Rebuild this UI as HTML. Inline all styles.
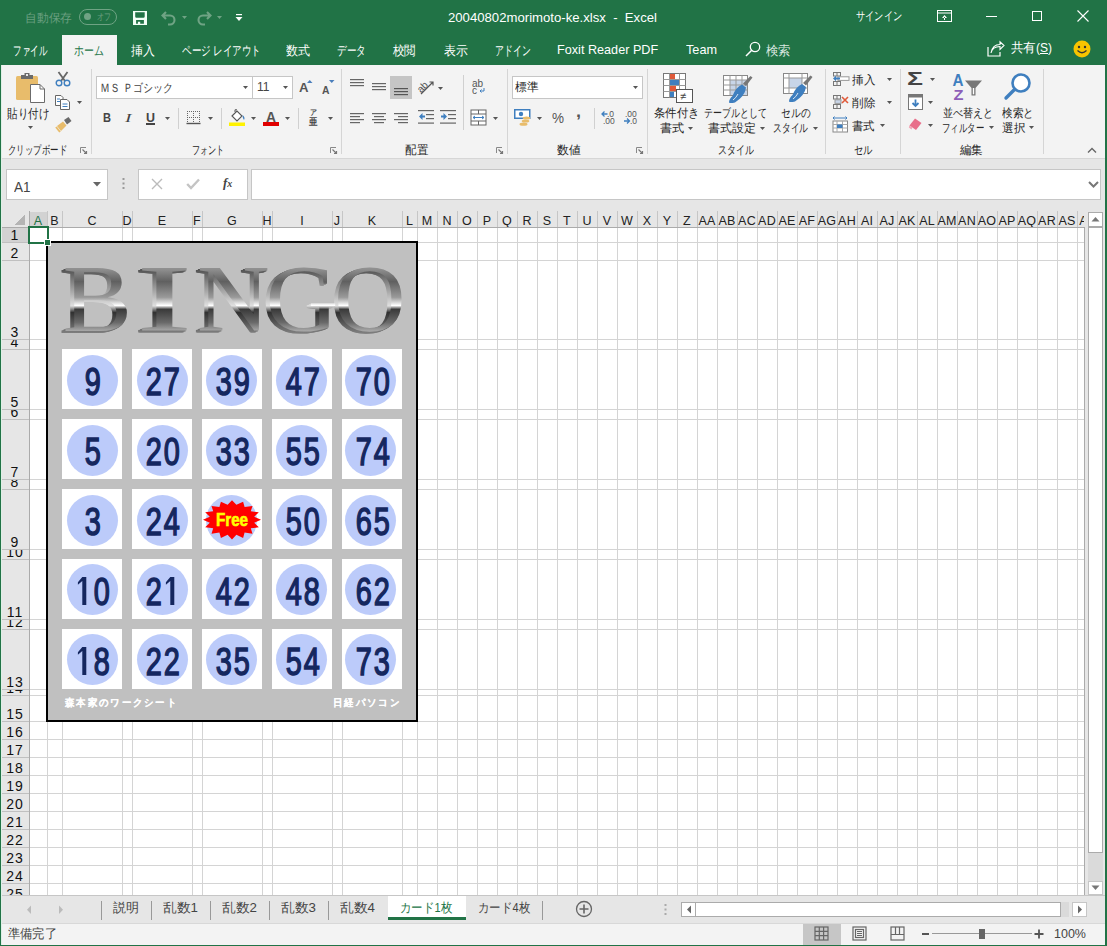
<!DOCTYPE html><html><head><meta charset="utf-8"><style>
*{margin:0;padding:0;box-sizing:border-box}
body{width:1107px;height:946px;overflow:hidden;position:relative;background:#f3f3f3;font-family:"Liberation Sans",sans-serif;color:#222}
.t{position:absolute;white-space:nowrap;line-height:1}
.hd{position:absolute;top:210px;height:17px;text-align:center;font-size:12.5px;line-height:22.5px;overflow:hidden;letter-spacing:0.2px}
.rh{position:absolute;left:0;width:27px;text-align:center;font-size:14px;line-height:14px;letter-spacing:1px;padding-left:1px;color:#111}
svg{position:absolute;overflow:visible}
</style></head><body>
<div style="position:absolute;left:0px;top:0px;width:1107px;height:65px;background:#217346"></div>
<div class="t" id="x1" style="left:25px;top:12px;font-size:12px;color:#6a9f80;transform:scaleX(0.9792);transform-origin:0 0;">自動保存</div>
<div style="position:absolute;left:79px;top:9px;width:38px;height:16px;border:1px solid #6fa384;border-radius:8px"></div>
<div style="position:absolute;left:84px;top:13px;width:7px;height:7px;background:#6fa384;border-radius:50%"></div>
<div class="t" id="x2" style="left:97px;top:12px;font-size:10px;color:#6a9f80;transform:scaleX(0.7000);transform-origin:0 0;">オフ</div>
<svg style="left:133px;top:11px" width="14" height="14"><path d="M0 0 H14 V14 H0Z M2.2 1.3 V5.5 Q2.2 6.7 3.4 6.7 H10.5 Q11.7 6.7 11.7 5.5 V1.3Z M3.1 9.1 V12.8 H4.9 V10.7 H7.2 V12.8 H10.9 V9.1Z" fill="#f2fff6" fill-rule="evenodd"/></svg>
<svg style="left:161px;top:10px" width="16" height="16"><path d="M5 2 L1.5 5.5 L5 9 M1.5 5.5 H9 A4.5 4.5 0 0 1 9 14.5 H7" fill="none" stroke="#6fa384" stroke-width="2.1"/></svg>
<svg style="left:182px;top:16px" width="6" height="4"><path d="M0 0 H5 L2.5 3Z" fill="#6fa384"/></svg>
<svg style="left:196px;top:10px" width="16" height="16"><path d="M11 2 L14.5 5.5 L11 9 M14.5 5.5 H7 A4.5 4.5 0 0 0 7 14.5 H9" fill="none" stroke="#6fa384" stroke-width="2.1"/></svg>
<svg style="left:217px;top:16px" width="6" height="4"><path d="M0 0 H5 L2.5 3Z" fill="#6fa384"/></svg>
<svg style="left:235px;top:14px" width="8" height="8"><rect x="1" y="0" width="6" height="1.2" fill="#fff"/><path d="M0.5 3 H7.5 L4 7Z" fill="#fff"/></svg>
<div class="t" id="x3" style="left:448px;top:11px;font-size:13.5px;color:#fff;transform:scaleX(0.9739);transform-origin:0 0;">20040802morimoto-ke.xlsx&nbsp; - &nbsp;Excel</div>
<div class="t" id="x4" style="left:856px;top:10px;font-size:12px;color:#fff;transform:scaleX(0.7667);transform-origin:0 0;">サインイン</div>
<svg style="left:937px;top:10px" width="15" height="12"><rect x="0.5" y="0.5" width="14" height="11" fill="none" stroke="#fff"/><rect x="1" y="2.5" width="13" height="1" fill="#fff"/><path d="M7.5 5 L5 8 H10Z M7 7 H8 V10 H7Z" fill="#fff"/></svg>
<div style="position:absolute;left:986px;top:16px;width:11px;height:1px;background:#fff"></div>
<div style="position:absolute;left:1032px;top:11px;width:10px;height:10px;border:1px solid #fff"></div>
<svg style="left:1077px;top:10px" width="12" height="12"><path d="M0.5 0.5 L11.5 11.5 M11.5 0.5 L0.5 11.5" stroke="#fff" stroke-width="1.1"/></svg>
<div style="position:absolute;left:62px;top:35px;width:55px;height:30px;background:#f3f3f3"></div>
<div class="t" id="x5" style="left:12.6px;top:44.5px;font-size:12.5px;color:#ffffff;transform:scaleX(0.6577);transform-origin:0 0;">ファイル</div>
<div class="t" id="x6" style="left:73.8px;top:44.5px;font-size:12.5px;color:#217346;transform:scaleX(0.7667);transform-origin:0 0;">ホーム</div>
<div class="t" id="x7" style="left:131px;top:44.5px;font-size:12.5px;color:#ffffff;transform:scaleX(0.9154);transform-origin:0 0;">挿入</div>
<div class="t" id="x8" style="left:181.6px;top:44.5px;font-size:12.5px;color:#ffffff;transform:scaleX(0.7341);transform-origin:0 0;">ページ レイアウト</div>
<div class="t" id="x9" style="left:286.4px;top:44.5px;font-size:12.5px;color:#ffffff;transform:scaleX(0.9269);transform-origin:0 0;">数式</div>
<div class="t" id="x10" style="left:337px;top:44.5px;font-size:12.5px;color:#ffffff;transform:scaleX(0.7436);transform-origin:0 0;">データ</div>
<div class="t" id="x11" style="left:393.2px;top:44.5px;font-size:12.5px;color:#ffffff;transform:scaleX(0.8846);transform-origin:0 0;">校閲</div>
<div class="t" id="x12" style="left:444px;top:44.5px;font-size:12.5px;color:#ffffff;transform:scaleX(0.9154);transform-origin:0 0;">表示</div>
<div class="t" id="x13" style="left:494.6px;top:44.5px;font-size:12.5px;color:#ffffff;transform:scaleX(0.6808);transform-origin:0 0;">アドイン</div>
<div class="t" id="x14" style="left:557.2px;top:43px;font-size:13.5px;color:#ffffff;transform:scaleX(0.9366);transform-origin:0 0;">Foxit Reader PDF</div>
<div class="t" id="x15" style="left:686px;top:43px;font-size:13.5px;color:#ffffff;transform:scaleX(0.9389);transform-origin:0 0;">Team</div>
<div class="t" id="x16" style="left:766.4px;top:44.5px;font-size:12.5px;color:#dce9e1;transform:scaleX(0.9500);transform-origin:0 0;">検索</div>
<svg style="left:745px;top:41px" width="16" height="16"><circle cx="10" cy="6" r="4.7" fill="none" stroke="#fff" stroke-width="1.3"/><path d="M6.7 9.3 L1 15" stroke="#fff" stroke-width="1.5"/></svg>
<svg style="left:987px;top:41px" width="18" height="16"><path d="M1 6 V15 H13 V11" fill="none" stroke="#fff" stroke-width="1.2"/><path d="M4 12 C5 7 9 5.5 13 5.5 V8.5 L17 4.5 L13 0.8 V3.5 C9 3.5 5 6 4 12Z" fill="none" stroke="#fff" stroke-width="1.1"/></svg>
<div class="t" id="x17" style="left:1011px;top:42px;font-size:12.5px;color:#fff;transform:scaleX(0.9605);transform-origin:0 0;">共有(<u>S</u>)</div>
<svg style="left:1073px;top:40px" width="18" height="18"><circle cx="9" cy="9" r="8.5" fill="#f8c400"/><circle cx="6" cy="7" r="1.2" fill="#333"/><circle cx="12" cy="7" r="1.2" fill="#333"/><path d="M4.5 10.5 Q9 15 13.5 10.5" fill="none" stroke="#333" stroke-width="1.2"/></svg>
<div style="position:absolute;left:0px;top:65px;width:1107px;height:94px;background:#f3f3f3"></div>
<div style="position:absolute;left:0px;top:158px;width:1107px;height:1px;background:#d6d6d6"></div>
<div style="position:absolute;left:91px;top:69px;width:1px;height:85px;background:#d5d5d5"></div>
<div style="position:absolute;left:341px;top:69px;width:1px;height:85px;background:#d5d5d5"></div>
<div style="position:absolute;left:507px;top:69px;width:1px;height:85px;background:#d5d5d5"></div>
<div style="position:absolute;left:647px;top:69px;width:1px;height:85px;background:#d5d5d5"></div>
<div style="position:absolute;left:825px;top:69px;width:1px;height:85px;background:#d5d5d5"></div>
<div style="position:absolute;left:900px;top:69px;width:1px;height:85px;background:#d5d5d5"></div>
<div style="position:absolute;left:1043px;top:69px;width:1px;height:85px;background:#d5d5d5"></div>
<svg style="left:15px;top:72px" width="31" height="32">
<rect x="1" y="4" width="22" height="24" rx="1.5" fill="#e8bc6b"/>
<path d="M6 3 H9.5 V1 H14.5 V3 H18 V7 H6Z" fill="#6b6b6b"/>
<rect x="11" y="2" width="2" height="2" fill="#e8e8e8"/>
<path d="M15.5 12.5 H25 L29.5 17 V30.5 H15.5Z" fill="#fff" stroke="#6b6b6b" stroke-width="1"/>
<path d="M25 12.5 V17 H29.5" fill="none" stroke="#6b6b6b" stroke-width="1"/>
</svg>
<div class="t" id="x18" style="left:7px;top:107.5px;font-size:12.5px;color:#262626;transform:scaleX(0.8077);transform-origin:0 0;">貼り付け</div>
<svg style="left:28.0px;top:126.0px" width="5" height="3"><path d="M0 0 H5 L2.5 3Z" fill="#555"/></svg>
<div class="t" id="x19" style="left:8px;top:144px;font-size:12px;color:#262626;transform:scaleX(0.7024);transform-origin:0 0;">クリップボード</div>
<svg style="left:80px;top:147px" width="7" height="7"><path d="M0.5 6 V0.5 H6" fill="none" stroke="#888" stroke-width="1"/><path d="M2.5 2.5 L6 6 M4 6.5 H6.5 V4" fill="none" stroke="#777" stroke-width="1.2"/></svg>
<svg style="left:55px;top:71px" width="16" height="16">
<path d="M3.5 1 L10 10 M12.5 1 L6 10" stroke="#666" stroke-width="1.8"/>
<circle cx="4" cy="12" r="2.8" fill="none" stroke="#3f7fbf" stroke-width="1.4"/>
<circle cx="12" cy="12" r="2.8" fill="none" stroke="#3f7fbf" stroke-width="1.4"/>
</svg>
<svg style="left:55px;top:95px" width="16" height="15">
<path d="M0.5 0.5 H6 L8 2.5 V10.5 H0.5Z" fill="#fff" stroke="#666"/>
<path d="M5.5 4.5 H12 L14.5 7 V14.5 H5.5Z" fill="#fff" stroke="#666"/>
<path d="M2 4 H5 M2 6.5 H5 M7.5 9 H12.5 M7.5 11.5 H12.5" stroke="#3f7fbf" stroke-width="1"/>
</svg>
<svg style="left:77.0px;top:101.0px" width="5" height="3"><path d="M0 0 H5 L2.5 3Z" fill="#555"/></svg>
<svg style="left:55px;top:117px" width="17" height="16">
<path d="M9 3 L13.5 0 L16.5 4 L12 7.5Z" fill="#6b6b6b"/>
<path d="M2 9 L8 4.5 L11.5 8.5 L6 14Z" fill="#e8bc6b"/>
<path d="M1 10 L5 15" stroke="#e8bc6b" stroke-width="2"/>
</svg>
<div style="position:absolute;left:96px;top:76px;width:157px;height:23px;background:#fff;border:1px solid #c6c6c6"></div>
<div class="t" id="x20" style="left:100px;top:82.5px;font-size:11.5px;color:#444;transform:scaleX(0.8371);transform-origin:0 0;">ＭＳ Ｐゴシック</div>
<svg style="left:243.0px;top:86.0px" width="5" height="3"><path d="M0 0 H5 L2.5 3Z" fill="#555"/></svg>
<div style="position:absolute;left:252px;top:76px;width:41px;height:23px;background:#fff;border:1px solid #c6c6c6"></div>
<div class="t" id="x21" style="left:256.5px;top:81px;font-size:12.5px;color:#444;transform:scaleX(0.9627);transform-origin:0 0;">11</div>
<svg style="left:283.0px;top:86.0px" width="5" height="3"><path d="M0 0 H5 L2.5 3Z" fill="#555"/></svg>
<div class="t" id="x22" style="left:299px;top:81px;font-size:13.5px;font-weight:bold;color:#555;transform:scaleX(0.9744);transform-origin:0 0;">A</div>
<svg style="left:306.5px;top:80px" width="6" height="3"><path d="M0 3 H5.5 L2.75 0Z" fill="#4a7ebb"/></svg>
<div class="t" id="x23" style="left:322px;top:84.5px;font-size:10.5px;font-weight:bold;color:#555;transform:scaleX(0.9877);transform-origin:0 0;">A</div>
<svg style="left:329px;top:80px" width="6" height="3"><path d="M0 0 H5.5 L2.75 3Z" fill="#4a7ebb"/></svg>
<div class="t" id="x24" style="left:102.5px;top:111.5px;font-size:12px;font-weight:bold;color:#444;transform:scaleX(0.9225);transform-origin:0 0;">B</div>
<div class="t" id="x25" style="left:125px;top:111.5px;font-size:12.5px;font-style:italic;font-family:Liberation Serif,serif;color:#444;transform:scaleX(1.5581);transform-origin:0 0;">I</div>
<div class="t" id="x26" style="left:146px;top:111.5px;font-size:12px;font-weight:bold;color:#444;transform:scaleX(1.0378);transform-origin:0 0;">U</div>
<div style="position:absolute;left:146px;top:123px;width:9px;height:1.5px;background:#444"></div>
<svg style="left:165.0px;top:116.5px" width="5" height="3"><path d="M0 0 H5 L2.5 3Z" fill="#555"/></svg>
<div style="position:absolute;left:178px;top:108px;width:1px;height:21px;background:#d0d0d0"></div>
<svg style="left:186px;top:110px" width="15" height="15">
<path d="M1 1.5 H14 M1 7.5 H14 M1.5 1 V13 M7.5 1 V13 M13.5 1 V13" stroke="#666" stroke-width="1" stroke-dasharray="1 1" fill="none"/>
<rect x="0.5" y="12.8" width="14" height="1.4" fill="#555"/>
</svg>
<svg style="left:208.0px;top:116.5px" width="5" height="3"><path d="M0 0 H5 L2.5 3Z" fill="#555"/></svg>
<div style="position:absolute;left:221px;top:108px;width:1px;height:21px;background:#d0d0d0"></div>
<svg style="left:229px;top:109px" width="18" height="18">
<path d="M3 7 L8 2 L13 7 L8 12Z" fill="#fff" stroke="#555" stroke-width="1.1"/>
<path d="M6 3 L6 0.8 L8 0.8" fill="none" stroke="#555" stroke-width="1"/>
<path d="M13.5 6 Q16.5 8.5 15 11 Q13.5 9 13.5 6Z" fill="#3f7fbf"/>
<rect x="0" y="13.5" width="16" height="3.5" fill="#fff200"/>
</svg>
<svg style="left:251.0px;top:116.5px" width="5" height="3"><path d="M0 0 H5 L2.5 3Z" fill="#555"/></svg>
<div class="t" id="x27" style="left:266px;top:110px;font-size:14px;font-weight:bold;color:#555;transform:scaleX(0.9877);transform-origin:0 0;">A</div>
<div style="position:absolute;left:263px;top:122px;width:16px;height:4px;background:#e00000"></div>
<svg style="left:285.0px;top:116.5px" width="5" height="3"><path d="M0 0 H5 L2.5 3Z" fill="#555"/></svg>
<div style="position:absolute;left:298px;top:108px;width:1px;height:21px;background:#d0d0d0"></div>
<div class="t" id="x28" style="left:310px;top:108.5px;font-size:7.5px;color:#444;font-weight:bold;transform:scaleX(0.8750);transform-origin:0 0;">ア</div>
<div class="t" id="x29" style="left:309px;top:117px;font-size:9.5px;color:#444;font-weight:bold;transform:scaleX(0.8500);transform-origin:0 0;">亜</div>
<svg style="left:328.0px;top:116.5px" width="5" height="3"><path d="M0 0 H5 L2.5 3Z" fill="#555"/></svg>
<div class="t" id="x30" style="left:192.3px;top:144px;font-size:12px;color:#262626;transform:scaleX(0.6771);transform-origin:0 0;">フォント</div>
<svg style="left:330px;top:147px" width="7" height="7"><path d="M0.5 6 V0.5 H6" fill="none" stroke="#888" stroke-width="1"/><path d="M2.5 2.5 L6 6 M4 6.5 H6.5 V4" fill="none" stroke="#777" stroke-width="1.2"/></svg>
<svg style="left:350px;top:0px" width="16" height="130"><rect x="0" y="79" width="14" height="1.2" fill="#666"/><rect x="0" y="82" width="14" height="1.2" fill="#666"/><rect x="0" y="85" width="14" height="1.2" fill="#666"/></svg>
<svg style="left:372px;top:0px" width="16" height="130"><rect x="0" y="83" width="14" height="1.2" fill="#666"/><rect x="0" y="86" width="14" height="1.2" fill="#666"/><rect x="0" y="89" width="14" height="1.2" fill="#666"/></svg>
<div style="position:absolute;left:390px;top:76px;width:22px;height:23px;background:#c5c5c5"></div>
<svg style="left:394px;top:0px" width="16" height="130"><rect x="0" y="88" width="14" height="1.2" fill="#555"/><rect x="0" y="91" width="14" height="1.2" fill="#555"/><rect x="0" y="94" width="14" height="1.2" fill="#555"/></svg>
<svg style="left:417px;top:78px" width="20" height="18">
<text x="0" y="12" font-size="10" font-family="Liberation Sans" fill="#555" transform="rotate(-45 6 9)">ab</text>
<path d="M4 16 L16 4 M12.5 4 H16 V7.5" fill="none" stroke="#555" stroke-width="1.2"/>
</svg>
<svg style="left:438.0px;top:86.5px" width="5" height="3"><path d="M0 0 H5 L2.5 3Z" fill="#555"/></svg>
<svg style="left:350px;top:0px" width="16" height="130"><rect x="0" y="113" width="14" height="1.2" fill="#666"/><rect x="0" y="116" width="10" height="1.2" fill="#666"/><rect x="0" y="119" width="14" height="1.2" fill="#666"/><rect x="0" y="122" width="10" height="1.2" fill="#666"/></svg>
<svg style="left:372px;top:0px" width="16" height="130"><rect x="0.0" y="113" width="14" height="1.2" fill="#666"/><rect x="2.0" y="116" width="10" height="1.2" fill="#666"/><rect x="0.0" y="119" width="14" height="1.2" fill="#666"/><rect x="2.0" y="122" width="10" height="1.2" fill="#666"/></svg>
<svg style="left:394px;top:0px" width="16" height="130"><rect x="0" y="113" width="14" height="1.2" fill="#666"/><rect x="4" y="116" width="10" height="1.2" fill="#666"/><rect x="0" y="119" width="14" height="1.2" fill="#666"/><rect x="4" y="122" width="10" height="1.2" fill="#666"/></svg>
<svg style="left:418px;top:110px" width="17" height="15">
<rect x="0" y="0" width="16" height="1.2" fill="#666"/><rect x="0" y="12.5" width="16" height="1.2" fill="#666"/>
<rect x="8" y="4" width="8" height="1.2" fill="#666"/><rect x="8" y="8" width="8" height="1.2" fill="#666"/>
<path d="M1 6.5 L4.5 3 V5.5 H7 V7.5 H4.5 V10Z" fill="#3f7fbf"/>
</svg>
<svg style="left:440px;top:110px" width="17" height="15">
<rect x="0" y="0" width="16" height="1.2" fill="#666"/><rect x="0" y="12.5" width="16" height="1.2" fill="#666"/>
<rect x="8" y="4" width="8" height="1.2" fill="#666"/><rect x="8" y="8" width="8" height="1.2" fill="#666"/>
<path d="M7 6.5 L3.5 3 V5.5 H1 V7.5 H3.5 V10Z" fill="#3f7fbf"/>
</svg>
<div style="position:absolute;left:463px;top:75px;width:1px;height:55px;background:#d0d0d0"></div>
<svg style="left:472px;top:79px" width="14" height="16">
<text x="0" y="8" font-size="10" font-family="Liberation Sans" fill="#555">ab</text>
<text x="0" y="15" font-size="10" font-family="Liberation Sans" fill="#555">c</text>
<path d="M12 9 V12 H8 M9.5 10.5 L8 12 L9.5 13.5" fill="none" stroke="#3f7fbf" stroke-width="1"/>
</svg>
<svg style="left:470px;top:109px" width="17" height="17">
<rect x="1" y="1" width="15" height="15" fill="#fff" stroke="#666" stroke-width="1"/>
<path d="M1 5 H16 M1 12 H16 M8.5 1 V5 M8.5 12 V16" stroke="#666" stroke-width="1"/>
<path d="M3 8.5 H14 M5 7 L3 8.5 L5 10 M12 7 L14 8.5 L12 10" fill="none" stroke="#3f7fbf" stroke-width="1"/>
</svg>
<svg style="left:493.0px;top:117.0px" width="5" height="3"><path d="M0 0 H5 L2.5 3Z" fill="#555"/></svg>
<div class="t" id="x31" style="left:404.5px;top:143.5px;font-size:12px;color:#262626;transform:scaleX(0.9625);transform-origin:0 0;">配置</div>
<svg style="left:496px;top:147px" width="7" height="7"><path d="M0.5 6 V0.5 H6" fill="none" stroke="#888" stroke-width="1"/><path d="M2.5 2.5 L6 6 M4 6.5 H6.5 V4" fill="none" stroke="#777" stroke-width="1.2"/></svg>
<div style="position:absolute;left:512px;top:76px;width:131px;height:23px;background:#fff;border:1px solid #c6c6c6"></div>
<div class="t" id="x32" style="left:515.2px;top:81px;font-size:12px;color:#262626;transform:scaleX(0.9750);transform-origin:0 0;">標準</div>
<svg style="left:633.0px;top:86.0px" width="5" height="3"><path d="M0 0 H5 L2.5 3Z" fill="#555"/></svg>
<svg style="left:514px;top:109px" width="18" height="18">
<rect x="0.75" y="0.75" width="15" height="8.5" fill="#fff" stroke="#3f7fbf" stroke-width="1.5"/>
<circle cx="7" cy="5" r="2.2" fill="#3f7fbf"/>
<ellipse cx="12.5" cy="9" rx="3.8" ry="1.6" fill="#e8bc6b"/>
<ellipse cx="11.5" cy="12" rx="3.8" ry="1.6" fill="#e8bc6b"/>
<ellipse cx="9.5" cy="15.2" rx="4" ry="1.6" fill="#e8bc6b"/>
</svg>
<svg style="left:537.0px;top:117.0px" width="5" height="3"><path d="M0 0 H5 L2.5 3Z" fill="#555"/></svg>
<div class="t" id="x33" style="left:551.5px;top:111px;font-size:14px;color:#555;transform:scaleX(0.9636);transform-origin:0 0;">%</div>
<div class="t" id="x34" style="left:576px;top:103px;font-size:17px;font-weight:bold;color:#555;transform:scaleX(1.0561);transform-origin:0 0;">,</div>
<div style="position:absolute;left:594px;top:108px;width:1px;height:21px;background:#d0d0d0"></div>
<svg style="left:601px;top:110px" width="17" height="15">
<text x="6" y="7" font-size="8.5" font-family="Liberation Sans" fill="#555">.0</text>
<text x="2" y="14" font-size="8.5" font-family="Liberation Sans" fill="#555">.00</text>
<path d="M1 4 H6.5 M3.5 1.5 L1 4 L3.5 6.5" fill="none" stroke="#3f7fbf" stroke-width="1.3"/>
</svg>
<svg style="left:623px;top:110px" width="17" height="15">
<text x="2" y="7" font-size="8.5" font-family="Liberation Sans" fill="#555">.00</text>
<text x="7" y="14" font-size="8.5" font-family="Liberation Sans" fill="#555">.0</text>
<path d="M1 11 H6.5 M4 8.5 L6.5 11 L4 13.5" fill="none" stroke="#3f7fbf" stroke-width="1.3"/>
</svg>
<div class="t" id="x35" style="left:557.2px;top:143.5px;font-size:12px;color:#262626;transform:scaleX(0.9875);transform-origin:0 0;">数値</div>
<svg style="left:636px;top:147px" width="7" height="7"><path d="M0.5 6 V0.5 H6" fill="none" stroke="#888" stroke-width="1"/><path d="M2.5 2.5 L6 6 M4 6.5 H6.5 V4" fill="none" stroke="#777" stroke-width="1.2"/></svg>
<svg style="left:662px;top:72px" width="32" height="32">
<g fill="#fff" stroke="#777" stroke-width="1">
<rect x="1.5" y="1.5" width="22" height="24"/>
</g>
<path d="M1.5 7.5 H23.5 M1.5 13.5 H23.5 M1.5 19.5 H23.5 M7.5 1.5 V25.5 M17.5 1.5 V25.5" stroke="#999" stroke-width="1"/>
<rect x="8" y="2" width="5" height="5" fill="#e05a3a"/>
<rect x="8" y="8" width="9" height="5" fill="#3f7fbf"/>
<rect x="8" y="14" width="6" height="5" fill="#e05a3a"/>
<rect x="8" y="20" width="4" height="5" fill="#3f7fbf"/>
<rect x="14.5" y="17.5" width="16" height="13" fill="#fff" stroke="#555" stroke-width="1"/>
<text x="18" y="28" font-size="11" font-family="Liberation Sans" fill="#444">≠</text>
</svg>
<div class="t" id="x36" style="left:653.7px;top:107px;font-size:12px;color:#262626;transform:scaleX(0.9500);transform-origin:0 0;">条件付き</div>
<div class="t" id="x37" style="left:660px;top:122px;font-size:12px;color:#262626;transform:scaleX(1.0125);transform-origin:0 0;">書式</div>
<svg style="left:688.0px;top:126.5px" width="5" height="3"><path d="M0 0 H5 L2.5 3Z" fill="#555"/></svg>
<svg style="left:722px;top:74px" width="32" height="30">
<rect x="1.5" y="1.5" width="24" height="20" fill="#fff" stroke="#888"/>
<rect x="8" y="6" width="17" height="15" fill="#c8d5e8"/>
<path d="M1.5 6 H25.5 M1.5 11 H25.5 M1.5 16 H25.5 M8 1.5 V21.5 M14 1.5 V21.5 M20 1.5 V21.5" stroke="#999" stroke-width="1"/>
<path d="M30.5 3.5 L24 12 L21 9.5 L28.5 2Z" fill="#777"/>
<path d="M20 10.5 L24 13.5 Q23 22 13 28.5 Q8 29.5 7 28.5 Q7 25 10.5 22 Q14 13 20 10.5Z" fill="#3f7fbf"/>
<path d="M11 26 Q14 24 16 20" fill="none" stroke="#fff" stroke-width="0.8"/>
</svg>
<div class="t" id="x38" style="left:704.4px;top:107px;font-size:12px;color:#262626;transform:scaleX(0.7452);transform-origin:0 0;">テーブルとして</div>
<div class="t" id="x39" style="left:708.2px;top:122px;font-size:12px;color:#262626;transform:scaleX(1.0000);transform-origin:0 0;">書式設定</div>
<svg style="left:760.0px;top:126.5px" width="5" height="3"><path d="M0 0 H5 L2.5 3Z" fill="#555"/></svg>
<svg style="left:782px;top:72px" width="32" height="30">
<rect x="1.5" y="1.5" width="24" height="20" fill="#fff" stroke="#888"/>
<rect x="7" y="6" width="13" height="10" fill="#c8d5e8"/>
<path d="M1.5 6 H25.5 M1.5 16 H25.5 M7 1.5 V21.5 M20 1.5 V21.5" stroke="#999" stroke-width="1"/>
<path d="M30.5 5 L24 13.5 L21 11 L28.5 3.5Z" fill="#777"/>
<path d="M20 12 L24 15 Q23 23 13 29.5 Q8 30.5 7 29.5 Q7 26 10.5 23 Q14 14.5 20 12Z" fill="#3f7fbf"/>
<path d="M11 27 Q14 25 16 21" fill="none" stroke="#fff" stroke-width="0.8"/>
</svg>
<div class="t" id="x40" style="left:781.3px;top:107px;font-size:12px;color:#262626;transform:scaleX(0.8139);transform-origin:0 0;">セルの</div>
<div class="t" id="x41" style="left:772.9px;top:122px;font-size:12px;color:#262626;transform:scaleX(0.7313);transform-origin:0 0;">スタイル</div>
<svg style="left:812.5px;top:126.5px" width="5" height="3"><path d="M0 0 H5 L2.5 3Z" fill="#555"/></svg>
<div class="t" id="x42" style="left:717.7px;top:143.5px;font-size:12px;color:#262626;transform:scaleX(0.7500);transform-origin:0 0;">スタイル</div>
<svg style="left:832px;top:71px" width="18" height="16">
<g fill="none" stroke="#777" stroke-width="1"><rect x="1.5" y="1.5" width="7" height="3.5"/><rect x="1.5" y="10.5" width="7" height="4"/><path d="M5 10.5 V14.5 M5 1.5 V5"/></g>
<rect x="6" y="5.8" width="11" height="3.6" fill="#fff" stroke="#999" stroke-width="1"/>
<path d="M1 7.5 L4 4.8 V6.5 H8 V8.5 H4 V10.2Z" fill="#3f7fbf"/>
</svg>
<div class="t" id="x43" style="left:852.1px;top:74px;font-size:12px;color:#262626;transform:scaleX(0.9625);transform-origin:0 0;">挿入</div>
<svg style="left:886.5px;top:78.0px" width="5" height="3"><path d="M0 0 H5 L2.5 3Z" fill="#555"/></svg>
<svg style="left:832px;top:94px" width="18" height="16">
<g fill="none" stroke="#777" stroke-width="1"><rect x="1.5" y="1.5" width="7" height="3.5"/><rect x="1.5" y="10.5" width="7" height="4"/><path d="M5 10.5 V14.5 M5 1.5 V5"/></g>
<rect x="3" y="5.8" width="6" height="3.6" fill="#c8d5e8" stroke="#999" stroke-width="1"/>
<path d="M10 3 L16 9 M16 3 L10 9" stroke="#e05a3a" stroke-width="1.6"/>
</svg>
<div class="t" id="x44" style="left:852.1px;top:97px;font-size:12px;color:#262626;transform:scaleX(0.9625);transform-origin:0 0;">削除</div>
<svg style="left:886.5px;top:101.0px" width="5" height="3"><path d="M0 0 H5 L2.5 3Z" fill="#555"/></svg>
<svg style="left:832px;top:116px" width="17" height="17">
<path d="M1 2 H15 M2.5 0.5 L1 2 L2.5 3.5 M13.5 0.5 L15 2 L13.5 3.5" fill="none" stroke="#3f7fbf" stroke-width="1"/>
<rect x="1" y="5" width="14.5" height="11" fill="#fff" stroke="#888" stroke-width="1"/>
<path d="M1 8.5 H15.5 M1 12 H15.5 M5 5 V16 M10.5 5 V16" stroke="#aaa" stroke-width="1"/>
<rect x="5" y="8.5" width="5.5" height="3.5" fill="#3f7fbf"/>
</svg>
<div class="t" id="x45" style="left:852.3px;top:120px;font-size:12px;color:#262626;transform:scaleX(0.9542);transform-origin:0 0;">書式</div>
<svg style="left:880.0px;top:124.0px" width="5" height="3"><path d="M0 0 H5 L2.5 3Z" fill="#555"/></svg>
<div class="t" id="x46" style="left:854.1px;top:143.5px;font-size:12px;color:#262626;transform:scaleX(0.7750);transform-origin:0 0;">セル</div>
<div class="t" id="x47" style="left:907px;top:69px;font-size:19px;color:#444;font-weight:bold;transform:scaleX(1.4027);transform-origin:0 0;">Σ</div>
<svg style="left:930.0px;top:78.0px" width="5" height="3"><path d="M0 0 H5 L2.5 3Z" fill="#555"/></svg>
<svg style="left:908px;top:94px" width="16" height="17">
<rect x="0.5" y="0.5" width="14" height="15" fill="#fff" stroke="#777"/>
<rect x="0.5" y="0.5" width="14" height="3" fill="#777"/>
<path d="M7.5 5.5 V12 M4.5 9 L7.5 12 L10.5 9" fill="none" stroke="#3f7fbf" stroke-width="1.8"/>
</svg>
<svg style="left:928.0px;top:101.0px" width="5" height="3"><path d="M0 0 H5 L2.5 3Z" fill="#555"/></svg>
<svg style="left:908px;top:117px" width="15" height="15">
<path d="M7 1.5 L13.5 6 L8 13 L1.5 8.5Z" fill="#e86f8a"/>
<path d="M1.5 8.5 L4.5 10.5 L3.5 12.5 L0.8 10.5Z" fill="#f2a7b6"/>
</svg>
<svg style="left:928.0px;top:123.5px" width="5" height="3"><path d="M0 0 H5 L2.5 3Z" fill="#555"/></svg>
<svg style="left:952px;top:73px" width="32" height="28">
<text x="0.5" y="12.5" font-size="16" font-weight="bold" font-family="Liberation Sans" fill="#3f7fbf" textLength="11" lengthAdjust="spacingAndGlyphs">A</text>
<text x="1.5" y="27" font-size="15" font-weight="bold" font-family="Liberation Sans" fill="#8e5fb8" textLength="10" lengthAdjust="spacingAndGlyphs">Z</text>
<path d="M13 7.5 H30 L23.5 15 V22.5 H19.5 V15Z" fill="#777"/>
<path d="M20.8 15 V21.3 H22.2 V15Z" fill="#fff"/>
</svg>
<div class="t" id="x48" style="left:943.1px;top:107px;font-size:12px;color:#262626;transform:scaleX(0.8400);transform-origin:0 0;">並べ替えと</div>
<div class="t" id="x49" style="left:942px;top:121.5px;font-size:12px;color:#262626;transform:scaleX(0.7000);transform-origin:0 0;">フィルター</div>
<svg style="left:989.0px;top:126.0px" width="5" height="3"><path d="M0 0 H5 L2.5 3Z" fill="#555"/></svg>
<svg style="left:1003px;top:72px" width="30" height="29">
<circle cx="18" cy="11" r="8.5" fill="#fff" stroke="#3f7fbf" stroke-width="2.6"/>
<path d="M11.5 17.5 L3 26" stroke="#3f7fbf" stroke-width="3.4" stroke-linecap="round"/>
</svg>
<div class="t" id="x50" style="left:1002.3px;top:107px;font-size:12px;color:#262626;transform:scaleX(0.8778);transform-origin:0 0;">検索と</div>
<div class="t" id="x51" style="left:1001.6px;top:121.5px;font-size:12px;color:#262626;transform:scaleX(0.9625);transform-origin:0 0;">選択</div>
<svg style="left:1029.0px;top:126.0px" width="5" height="3"><path d="M0 0 H5 L2.5 3Z" fill="#555"/></svg>
<div class="t" id="x52" style="left:960.3px;top:143.5px;font-size:12px;color:#262626;transform:scaleX(0.9583);transform-origin:0 0;">編集</div>
<svg style="left:1087px;top:147px" width="10" height="7"><path d="M1 5.5 L5 1.5 L9 5.5" fill="none" stroke="#666" stroke-width="1.4"/></svg>
<div style="position:absolute;left:0px;top:159px;width:1107px;height:736px;background:#e6e6e6"></div>
<div style="position:absolute;left:6px;top:169px;width:102px;height:31px;background:#fff;border:1px solid #c6c6c6"></div>
<div class="t" id="x53" style="left:14px;top:180px;font-size:14px;color:#444;transform:scaleX(0.9635);transform-origin:0 0;">A1</div>
<svg style="left:93px;top:182px" width="8" height="5"><path d="M0 0 H8 L4 4.5Z" fill="#666"/></svg>
<svg style="left:122px;top:178px" width="3" height="12"><rect x="0.5" y="0" width="2" height="2" fill="#999"/><rect x="0.5" y="4.5" width="2" height="2" fill="#999"/><rect x="0.5" y="9" width="2" height="2" fill="#999"/></svg>
<div style="position:absolute;left:138px;top:169px;width:110px;height:31px;background:#fff;border:1px solid #c6c6c6"></div>
<svg style="left:151px;top:178px" width="12" height="12"><path d="M1 1 L11 11 M11 1 L1 11" stroke="#bbb" stroke-width="1.4"/></svg>
<svg style="left:186px;top:178px" width="14" height="12"><path d="M1.2 6 L5 10 L13 1.5" fill="none" stroke="#c4c4c4" stroke-width="2.4"/></svg>
<div class="t" id="x54" style="left:223px;top:175.5px;font-size:13px;font-family:Liberation Serif,serif;font-weight:bold;color:#444;"><i>f</i><span style="font-size:10px"><i>x</i></span></div>
<div style="position:absolute;left:251px;top:169px;width:850px;height:31px;background:#fff;border:1px solid #c6c6c6"></div>
<svg style="left:1088px;top:181px" width="11" height="7"><path d="M1 1 L5.5 5.5 L10 1" fill="none" stroke="#777" stroke-width="2"/></svg>
<svg width="1107" height="946" style="left:0;top:0" shape-rendering="crispEdges"><rect x="30" y="228" width="1054" height="667" fill="#fff"/><rect x="47" y="228" width="1" height="667" fill="#d4d4d4"/><rect x="62" y="228" width="1" height="667" fill="#d4d4d4"/><rect x="122" y="228" width="1" height="667" fill="#d4d4d4"/><rect x="132" y="228" width="1" height="667" fill="#d4d4d4"/><rect x="192" y="228" width="1" height="667" fill="#d4d4d4"/><rect x="202" y="228" width="1" height="667" fill="#d4d4d4"/><rect x="262" y="228" width="1" height="667" fill="#d4d4d4"/><rect x="272" y="228" width="1" height="667" fill="#d4d4d4"/><rect x="332" y="228" width="1" height="667" fill="#d4d4d4"/><rect x="342" y="228" width="1" height="667" fill="#d4d4d4"/><rect x="402" y="228" width="1" height="667" fill="#d4d4d4"/><rect x="417" y="228" width="1" height="667" fill="#d4d4d4"/><rect x="437" y="228" width="1" height="667" fill="#d4d4d4"/><rect x="457" y="228" width="1" height="667" fill="#d4d4d4"/><rect x="477" y="228" width="1" height="667" fill="#d4d4d4"/><rect x="497" y="228" width="1" height="667" fill="#d4d4d4"/><rect x="517" y="228" width="1" height="667" fill="#d4d4d4"/><rect x="537" y="228" width="1" height="667" fill="#d4d4d4"/><rect x="557" y="228" width="1" height="667" fill="#d4d4d4"/><rect x="577" y="228" width="1" height="667" fill="#d4d4d4"/><rect x="597" y="228" width="1" height="667" fill="#d4d4d4"/><rect x="617" y="228" width="1" height="667" fill="#d4d4d4"/><rect x="637" y="228" width="1" height="667" fill="#d4d4d4"/><rect x="657" y="228" width="1" height="667" fill="#d4d4d4"/><rect x="677" y="228" width="1" height="667" fill="#d4d4d4"/><rect x="697" y="228" width="1" height="667" fill="#d4d4d4"/><rect x="717" y="228" width="1" height="667" fill="#d4d4d4"/><rect x="737" y="228" width="1" height="667" fill="#d4d4d4"/><rect x="757" y="228" width="1" height="667" fill="#d4d4d4"/><rect x="777" y="228" width="1" height="667" fill="#d4d4d4"/><rect x="797" y="228" width="1" height="667" fill="#d4d4d4"/><rect x="817" y="228" width="1" height="667" fill="#d4d4d4"/><rect x="837" y="228" width="1" height="667" fill="#d4d4d4"/><rect x="857" y="228" width="1" height="667" fill="#d4d4d4"/><rect x="877" y="228" width="1" height="667" fill="#d4d4d4"/><rect x="897" y="228" width="1" height="667" fill="#d4d4d4"/><rect x="917" y="228" width="1" height="667" fill="#d4d4d4"/><rect x="937" y="228" width="1" height="667" fill="#d4d4d4"/><rect x="957" y="228" width="1" height="667" fill="#d4d4d4"/><rect x="977" y="228" width="1" height="667" fill="#d4d4d4"/><rect x="997" y="228" width="1" height="667" fill="#d4d4d4"/><rect x="1017" y="228" width="1" height="667" fill="#d4d4d4"/><rect x="1037" y="228" width="1" height="667" fill="#d4d4d4"/><rect x="1057" y="228" width="1" height="667" fill="#d4d4d4"/><rect x="1077" y="228" width="1" height="667" fill="#d4d4d4"/><rect x="30" y="242" width="1054" height="1" fill="#d4d4d4"/><rect x="30" y="260" width="1054" height="1" fill="#d4d4d4"/><rect x="30" y="339" width="1054" height="1" fill="#d4d4d4"/><rect x="30" y="349" width="1054" height="1" fill="#d4d4d4"/><rect x="30" y="409" width="1054" height="1" fill="#d4d4d4"/><rect x="30" y="419" width="1054" height="1" fill="#d4d4d4"/><rect x="30" y="479" width="1054" height="1" fill="#d4d4d4"/><rect x="30" y="489" width="1054" height="1" fill="#d4d4d4"/><rect x="30" y="549" width="1054" height="1" fill="#d4d4d4"/><rect x="30" y="559" width="1054" height="1" fill="#d4d4d4"/><rect x="30" y="619" width="1054" height="1" fill="#d4d4d4"/><rect x="30" y="629" width="1054" height="1" fill="#d4d4d4"/><rect x="30" y="689" width="1054" height="1" fill="#d4d4d4"/><rect x="30" y="695" width="1054" height="1" fill="#d4d4d4"/><rect x="30" y="721" width="1054" height="1" fill="#d4d4d4"/><rect x="30" y="739" width="1054" height="1" fill="#d4d4d4"/><rect x="30" y="757" width="1054" height="1" fill="#d4d4d4"/><rect x="30" y="775" width="1054" height="1" fill="#d4d4d4"/><rect x="30" y="793" width="1054" height="1" fill="#d4d4d4"/><rect x="30" y="811" width="1054" height="1" fill="#d4d4d4"/><rect x="30" y="829" width="1054" height="1" fill="#d4d4d4"/><rect x="30" y="847" width="1054" height="1" fill="#d4d4d4"/><rect x="30" y="865" width="1054" height="1" fill="#d4d4d4"/><rect x="30" y="883" width="1054" height="1" fill="#d4d4d4"/><rect x="47" y="211" width="1" height="16" fill="#c6c6c6"/><rect x="62" y="211" width="1" height="16" fill="#c6c6c6"/><rect x="122" y="211" width="1" height="16" fill="#c6c6c6"/><rect x="132" y="211" width="1" height="16" fill="#c6c6c6"/><rect x="192" y="211" width="1" height="16" fill="#c6c6c6"/><rect x="202" y="211" width="1" height="16" fill="#c6c6c6"/><rect x="262" y="211" width="1" height="16" fill="#c6c6c6"/><rect x="272" y="211" width="1" height="16" fill="#c6c6c6"/><rect x="332" y="211" width="1" height="16" fill="#c6c6c6"/><rect x="342" y="211" width="1" height="16" fill="#c6c6c6"/><rect x="402" y="211" width="1" height="16" fill="#c6c6c6"/><rect x="417" y="211" width="1" height="16" fill="#c6c6c6"/><rect x="437" y="211" width="1" height="16" fill="#c6c6c6"/><rect x="457" y="211" width="1" height="16" fill="#c6c6c6"/><rect x="477" y="211" width="1" height="16" fill="#c6c6c6"/><rect x="497" y="211" width="1" height="16" fill="#c6c6c6"/><rect x="517" y="211" width="1" height="16" fill="#c6c6c6"/><rect x="537" y="211" width="1" height="16" fill="#c6c6c6"/><rect x="557" y="211" width="1" height="16" fill="#c6c6c6"/><rect x="577" y="211" width="1" height="16" fill="#c6c6c6"/><rect x="597" y="211" width="1" height="16" fill="#c6c6c6"/><rect x="617" y="211" width="1" height="16" fill="#c6c6c6"/><rect x="637" y="211" width="1" height="16" fill="#c6c6c6"/><rect x="657" y="211" width="1" height="16" fill="#c6c6c6"/><rect x="677" y="211" width="1" height="16" fill="#c6c6c6"/><rect x="697" y="211" width="1" height="16" fill="#c6c6c6"/><rect x="717" y="211" width="1" height="16" fill="#c6c6c6"/><rect x="737" y="211" width="1" height="16" fill="#c6c6c6"/><rect x="757" y="211" width="1" height="16" fill="#c6c6c6"/><rect x="777" y="211" width="1" height="16" fill="#c6c6c6"/><rect x="797" y="211" width="1" height="16" fill="#c6c6c6"/><rect x="817" y="211" width="1" height="16" fill="#c6c6c6"/><rect x="837" y="211" width="1" height="16" fill="#c6c6c6"/><rect x="857" y="211" width="1" height="16" fill="#c6c6c6"/><rect x="877" y="211" width="1" height="16" fill="#c6c6c6"/><rect x="897" y="211" width="1" height="16" fill="#c6c6c6"/><rect x="917" y="211" width="1" height="16" fill="#c6c6c6"/><rect x="937" y="211" width="1" height="16" fill="#c6c6c6"/><rect x="957" y="211" width="1" height="16" fill="#c6c6c6"/><rect x="977" y="211" width="1" height="16" fill="#c6c6c6"/><rect x="997" y="211" width="1" height="16" fill="#c6c6c6"/><rect x="1017" y="211" width="1" height="16" fill="#c6c6c6"/><rect x="1037" y="211" width="1" height="16" fill="#c6c6c6"/><rect x="1057" y="211" width="1" height="16" fill="#c6c6c6"/><rect x="1077" y="211" width="1" height="16" fill="#c6c6c6"/><rect x="1" y="242" width="28" height="1" fill="#c0c0c0"/><rect x="1" y="260" width="28" height="1" fill="#c0c0c0"/><rect x="1" y="339" width="28" height="1" fill="#c0c0c0"/><rect x="1" y="349" width="28" height="1" fill="#c0c0c0"/><rect x="1" y="409" width="28" height="1" fill="#c0c0c0"/><rect x="1" y="419" width="28" height="1" fill="#c0c0c0"/><rect x="1" y="479" width="28" height="1" fill="#c0c0c0"/><rect x="1" y="489" width="28" height="1" fill="#c0c0c0"/><rect x="1" y="549" width="28" height="1" fill="#c0c0c0"/><rect x="1" y="559" width="28" height="1" fill="#c0c0c0"/><rect x="1" y="619" width="28" height="1" fill="#c0c0c0"/><rect x="1" y="629" width="28" height="1" fill="#c0c0c0"/><rect x="1" y="689" width="28" height="1" fill="#c0c0c0"/><rect x="1" y="695" width="28" height="1" fill="#c0c0c0"/><rect x="1" y="721" width="28" height="1" fill="#c0c0c0"/><rect x="1" y="739" width="28" height="1" fill="#c0c0c0"/><rect x="1" y="757" width="28" height="1" fill="#c0c0c0"/><rect x="1" y="775" width="28" height="1" fill="#c0c0c0"/><rect x="1" y="793" width="28" height="1" fill="#c0c0c0"/><rect x="1" y="811" width="28" height="1" fill="#c0c0c0"/><rect x="1" y="829" width="28" height="1" fill="#c0c0c0"/><rect x="1" y="847" width="28" height="1" fill="#c0c0c0"/><rect x="1" y="865" width="28" height="1" fill="#c0c0c0"/><rect x="1" y="883" width="28" height="1" fill="#c0c0c0"/><rect x="29" y="212" width="18" height="15" fill="#d2d2d2"/><rect x="1" y="228" width="28" height="14" fill="#d2d2d2"/><rect x="1" y="227" width="1084" height="1" fill="#ababab"/><rect x="29" y="211" width="1" height="684" fill="#ababab"/><rect x="1084" y="227" width="1" height="668" fill="#ababab"/><rect x="1" y="895" width="1104" height="1" fill="#c6c6c6"/><path d="M25 214 L25 225 L14 225 Z" fill="#b4b4b4"/></svg>
<div style="position:absolute;left:0;top:0;width:1084px;height:230px;overflow:hidden">
<div class="hd" style="left:29px;width:18px;color:#217346">A</div>
<div class="hd" style="left:47px;width:15px;color:#222">B</div>
<div class="hd" style="left:62px;width:60px;color:#222">C</div>
<div class="hd" style="left:122px;width:10px;color:#222">D</div>
<div class="hd" style="left:132px;width:60px;color:#222">E</div>
<div class="hd" style="left:192px;width:10px;color:#222">F</div>
<div class="hd" style="left:202px;width:60px;color:#222">G</div>
<div class="hd" style="left:262px;width:10px;color:#222">H</div>
<div class="hd" style="left:272px;width:60px;color:#222">I</div>
<div class="hd" style="left:332px;width:10px;color:#222">J</div>
<div class="hd" style="left:342px;width:60px;color:#222">K</div>
<div class="hd" style="left:402px;width:15px;color:#222">L</div>
<div class="hd" style="left:417px;width:20px;color:#222">M</div>
<div class="hd" style="left:437px;width:20px;color:#222">N</div>
<div class="hd" style="left:457px;width:20px;color:#222">O</div>
<div class="hd" style="left:477px;width:20px;color:#222">P</div>
<div class="hd" style="left:497px;width:20px;color:#222">Q</div>
<div class="hd" style="left:517px;width:20px;color:#222">R</div>
<div class="hd" style="left:537px;width:20px;color:#222">S</div>
<div class="hd" style="left:557px;width:20px;color:#222">T</div>
<div class="hd" style="left:577px;width:20px;color:#222">U</div>
<div class="hd" style="left:597px;width:20px;color:#222">V</div>
<div class="hd" style="left:617px;width:20px;color:#222">W</div>
<div class="hd" style="left:637px;width:20px;color:#222">X</div>
<div class="hd" style="left:657px;width:20px;color:#222">Y</div>
<div class="hd" style="left:677px;width:20px;color:#222">Z</div>
<div class="hd" style="left:697px;width:20px;color:#222">AA</div>
<div class="hd" style="left:717px;width:20px;color:#222">AB</div>
<div class="hd" style="left:737px;width:20px;color:#222">AC</div>
<div class="hd" style="left:757px;width:20px;color:#222">AD</div>
<div class="hd" style="left:777px;width:20px;color:#222">AE</div>
<div class="hd" style="left:797px;width:20px;color:#222">AF</div>
<div class="hd" style="left:817px;width:20px;color:#222">AG</div>
<div class="hd" style="left:837px;width:20px;color:#222">AH</div>
<div class="hd" style="left:857px;width:20px;color:#222">AI</div>
<div class="hd" style="left:877px;width:20px;color:#222">AJ</div>
<div class="hd" style="left:897px;width:20px;color:#222">AK</div>
<div class="hd" style="left:917px;width:20px;color:#222">AL</div>
<div class="hd" style="left:937px;width:20px;color:#222">AM</div>
<div class="hd" style="left:957px;width:20px;color:#222">AN</div>
<div class="hd" style="left:977px;width:20px;color:#222">AO</div>
<div class="hd" style="left:997px;width:20px;color:#222">AP</div>
<div class="hd" style="left:1017px;width:20px;color:#222">AQ</div>
<div class="hd" style="left:1037px;width:20px;color:#222">AR</div>
<div class="hd" style="left:1057px;width:20px;color:#222">AS</div>
<div class="hd" style="left:1077px;width:20px;color:#222">AT</div>
</div>
<div style="position:absolute;left:1px;top:228px;width:28px;height:14px;overflow:hidden"><div class="rh" style="top:auto;bottom:0px">1</div></div>
<div style="position:absolute;left:1px;top:243px;width:28px;height:17px;overflow:hidden"><div class="rh" style="top:auto;bottom:0px">2</div></div>
<div style="position:absolute;left:1px;top:261px;width:28px;height:78px;overflow:hidden"><div class="rh" style="top:auto;bottom:0px">3</div></div>
<div style="position:absolute;left:1px;top:340px;width:28px;height:9px;overflow:hidden"><div class="rh" style="top:auto;bottom:0px">4</div></div>
<div style="position:absolute;left:1px;top:350px;width:28px;height:59px;overflow:hidden"><div class="rh" style="top:auto;bottom:0px">5</div></div>
<div style="position:absolute;left:1px;top:410px;width:28px;height:9px;overflow:hidden"><div class="rh" style="top:auto;bottom:0px">6</div></div>
<div style="position:absolute;left:1px;top:420px;width:28px;height:59px;overflow:hidden"><div class="rh" style="top:auto;bottom:0px">7</div></div>
<div style="position:absolute;left:1px;top:480px;width:28px;height:9px;overflow:hidden"><div class="rh" style="top:auto;bottom:0px">8</div></div>
<div style="position:absolute;left:1px;top:490px;width:28px;height:59px;overflow:hidden"><div class="rh" style="top:auto;bottom:0px">9</div></div>
<div style="position:absolute;left:1px;top:550px;width:28px;height:9px;overflow:hidden"><div class="rh" style="top:auto;bottom:0px">10</div></div>
<div style="position:absolute;left:1px;top:560px;width:28px;height:59px;overflow:hidden"><div class="rh" style="top:auto;bottom:0px">11</div></div>
<div style="position:absolute;left:1px;top:620px;width:28px;height:9px;overflow:hidden"><div class="rh" style="top:auto;bottom:0px">12</div></div>
<div style="position:absolute;left:1px;top:630px;width:28px;height:59px;overflow:hidden"><div class="rh" style="top:auto;bottom:0px">13</div></div>
<div style="position:absolute;left:1px;top:690px;width:28px;height:5px;overflow:hidden"><div class="rh" style="top:auto;bottom:0px">14</div></div>
<div style="position:absolute;left:1px;top:696px;width:28px;height:25px;overflow:hidden"><div class="rh" style="top:auto;bottom:0px">15</div></div>
<div style="position:absolute;left:1px;top:722px;width:28px;height:17px;overflow:hidden"><div class="rh" style="top:auto;bottom:0px">16</div></div>
<div style="position:absolute;left:1px;top:740px;width:28px;height:17px;overflow:hidden"><div class="rh" style="top:auto;bottom:0px">17</div></div>
<div style="position:absolute;left:1px;top:758px;width:28px;height:17px;overflow:hidden"><div class="rh" style="top:auto;bottom:0px">18</div></div>
<div style="position:absolute;left:1px;top:776px;width:28px;height:17px;overflow:hidden"><div class="rh" style="top:auto;bottom:0px">19</div></div>
<div style="position:absolute;left:1px;top:794px;width:28px;height:17px;overflow:hidden"><div class="rh" style="top:auto;bottom:0px">20</div></div>
<div style="position:absolute;left:1px;top:812px;width:28px;height:17px;overflow:hidden"><div class="rh" style="top:auto;bottom:0px">21</div></div>
<div style="position:absolute;left:1px;top:830px;width:28px;height:17px;overflow:hidden"><div class="rh" style="top:auto;bottom:0px">22</div></div>
<div style="position:absolute;left:1px;top:848px;width:28px;height:17px;overflow:hidden"><div class="rh" style="top:auto;bottom:0px">23</div></div>
<div style="position:absolute;left:1px;top:866px;width:28px;height:17px;overflow:hidden"><div class="rh" style="top:auto;bottom:0px">24</div></div>
<div style="position:absolute;left:1px;top:884px;width:28px;height:11px;overflow:hidden"><div class="rh" style="top:auto;bottom:-6px">25</div></div>
<div style="position:absolute;left:1088px;top:212px;width:15px;height:683px;background:#e6e6e6"></div>
<div style="position:absolute;left:1088px;top:212px;width:15px;height:15px;background:#fff;border:1px solid #ababab"></div>
<svg style="left:1091px;top:216px" width="9" height="6"><path d="M0.5 5.5 L4.5 1 L8.5 5.5Z" fill="#777"/></svg>
<div style="position:absolute;left:1088px;top:227px;width:15px;height:626px;background:#fff;border:1px solid #ababab"></div>
<div style="position:absolute;left:1088px;top:853px;width:15px;height:28px;background:#dadada"></div>
<div style="position:absolute;left:1088px;top:881px;width:15px;height:14px;background:#fff;border:1px solid #c6c6c6"></div>
<svg style="left:1091px;top:885px" width="9" height="6"><path d="M0.5 0.5 L4.5 5 L8.5 0.5Z" fill="#777"/></svg>
<div style="position:absolute;left:46px;top:241px;width:372px;height:481px;background:#c0c0c0;border:2px solid #000"></div>
<div style="position:absolute;left:62px;top:349px;width:60px;height:60px;background:#fff"></div>
<div style="position:absolute;left:67.0px;top:354.9px;width:51px;height:51px;background:#bccbfa;border-radius:50%"></div>
<div class="t" style="left:63px;top:362.2px;width:60px;height:32px;text-align:center"><span style="display:inline-block;font-size:39px;-webkit-text-stroke:1.5px #15275f;color:#15275f;transform:scaleX(0.74);transform-origin:50% 0">9</span></div>
<div style="position:absolute;left:132px;top:349px;width:60px;height:60px;background:#fff"></div>
<div style="position:absolute;left:136.5px;top:354.9px;width:51px;height:51px;background:#bccbfa;border-radius:50%"></div>
<div class="t" style="left:124.25px;top:362.2px;width:60px;height:32px;text-align:center"><span style="display:inline-block;font-size:39px;-webkit-text-stroke:1.5px #15275f;color:#15275f;transform:scaleX(0.74);transform-origin:50% 0">2</span></div>
<div class="t" style="left:141.75px;top:362.2px;width:60px;height:32px;text-align:center"><span style="display:inline-block;font-size:39px;-webkit-text-stroke:1.5px #15275f;color:#15275f;transform:scaleX(0.74);transform-origin:50% 0">7</span></div>
<div style="position:absolute;left:202px;top:349px;width:60px;height:60px;background:#fff"></div>
<div style="position:absolute;left:206.0px;top:354.9px;width:51px;height:51px;background:#bccbfa;border-radius:50%"></div>
<div class="t" style="left:194.25px;top:362.2px;width:60px;height:32px;text-align:center"><span style="display:inline-block;font-size:39px;-webkit-text-stroke:1.5px #15275f;color:#15275f;transform:scaleX(0.74);transform-origin:50% 0">3</span></div>
<div class="t" style="left:211.75px;top:362.2px;width:60px;height:32px;text-align:center"><span style="display:inline-block;font-size:39px;-webkit-text-stroke:1.5px #15275f;color:#15275f;transform:scaleX(0.74);transform-origin:50% 0">9</span></div>
<div style="position:absolute;left:272px;top:349px;width:60px;height:60px;background:#fff"></div>
<div style="position:absolute;left:275.5px;top:354.9px;width:51px;height:51px;background:#bccbfa;border-radius:50%"></div>
<div class="t" style="left:264.25px;top:362.2px;width:60px;height:32px;text-align:center"><span style="display:inline-block;font-size:39px;-webkit-text-stroke:1.5px #15275f;color:#15275f;transform:scaleX(0.74);transform-origin:50% 0">4</span></div>
<div class="t" style="left:281.75px;top:362.2px;width:60px;height:32px;text-align:center"><span style="display:inline-block;font-size:39px;-webkit-text-stroke:1.5px #15275f;color:#15275f;transform:scaleX(0.74);transform-origin:50% 0">7</span></div>
<div style="position:absolute;left:342px;top:349px;width:60px;height:60px;background:#fff"></div>
<div style="position:absolute;left:345.0px;top:354.9px;width:51px;height:51px;background:#bccbfa;border-radius:50%"></div>
<div class="t" style="left:334.25px;top:362.2px;width:60px;height:32px;text-align:center"><span style="display:inline-block;font-size:39px;-webkit-text-stroke:1.5px #15275f;color:#15275f;transform:scaleX(0.74);transform-origin:50% 0">7</span></div>
<div class="t" style="left:351.75px;top:362.2px;width:60px;height:32px;text-align:center"><span style="display:inline-block;font-size:39px;-webkit-text-stroke:1.5px #15275f;color:#15275f;transform:scaleX(0.74);transform-origin:50% 0">0</span></div>
<div style="position:absolute;left:62px;top:419px;width:60px;height:60px;background:#fff"></div>
<div style="position:absolute;left:67.0px;top:424.7px;width:51px;height:51px;background:#bccbfa;border-radius:50%"></div>
<div class="t" style="left:63px;top:432.2px;width:60px;height:32px;text-align:center"><span style="display:inline-block;font-size:39px;-webkit-text-stroke:1.5px #15275f;color:#15275f;transform:scaleX(0.74);transform-origin:50% 0">5</span></div>
<div style="position:absolute;left:132px;top:419px;width:60px;height:60px;background:#fff"></div>
<div style="position:absolute;left:136.5px;top:424.7px;width:51px;height:51px;background:#bccbfa;border-radius:50%"></div>
<div class="t" style="left:124.25px;top:432.2px;width:60px;height:32px;text-align:center"><span style="display:inline-block;font-size:39px;-webkit-text-stroke:1.5px #15275f;color:#15275f;transform:scaleX(0.74);transform-origin:50% 0">2</span></div>
<div class="t" style="left:141.75px;top:432.2px;width:60px;height:32px;text-align:center"><span style="display:inline-block;font-size:39px;-webkit-text-stroke:1.5px #15275f;color:#15275f;transform:scaleX(0.74);transform-origin:50% 0">0</span></div>
<div style="position:absolute;left:202px;top:419px;width:60px;height:60px;background:#fff"></div>
<div style="position:absolute;left:206.0px;top:424.7px;width:51px;height:51px;background:#bccbfa;border-radius:50%"></div>
<div class="t" style="left:194.25px;top:432.2px;width:60px;height:32px;text-align:center"><span style="display:inline-block;font-size:39px;-webkit-text-stroke:1.5px #15275f;color:#15275f;transform:scaleX(0.74);transform-origin:50% 0">3</span></div>
<div class="t" style="left:211.75px;top:432.2px;width:60px;height:32px;text-align:center"><span style="display:inline-block;font-size:39px;-webkit-text-stroke:1.5px #15275f;color:#15275f;transform:scaleX(0.74);transform-origin:50% 0">3</span></div>
<div style="position:absolute;left:272px;top:419px;width:60px;height:60px;background:#fff"></div>
<div style="position:absolute;left:275.5px;top:424.7px;width:51px;height:51px;background:#bccbfa;border-radius:50%"></div>
<div class="t" style="left:264.25px;top:432.2px;width:60px;height:32px;text-align:center"><span style="display:inline-block;font-size:39px;-webkit-text-stroke:1.5px #15275f;color:#15275f;transform:scaleX(0.74);transform-origin:50% 0">5</span></div>
<div class="t" style="left:281.75px;top:432.2px;width:60px;height:32px;text-align:center"><span style="display:inline-block;font-size:39px;-webkit-text-stroke:1.5px #15275f;color:#15275f;transform:scaleX(0.74);transform-origin:50% 0">5</span></div>
<div style="position:absolute;left:342px;top:419px;width:60px;height:60px;background:#fff"></div>
<div style="position:absolute;left:345.0px;top:424.7px;width:51px;height:51px;background:#bccbfa;border-radius:50%"></div>
<div class="t" style="left:334.25px;top:432.2px;width:60px;height:32px;text-align:center"><span style="display:inline-block;font-size:39px;-webkit-text-stroke:1.5px #15275f;color:#15275f;transform:scaleX(0.74);transform-origin:50% 0">7</span></div>
<div class="t" style="left:351.75px;top:432.2px;width:60px;height:32px;text-align:center"><span style="display:inline-block;font-size:39px;-webkit-text-stroke:1.5px #15275f;color:#15275f;transform:scaleX(0.74);transform-origin:50% 0">4</span></div>
<div style="position:absolute;left:62px;top:489px;width:60px;height:60px;background:#fff"></div>
<div style="position:absolute;left:67.0px;top:494.5px;width:51px;height:51px;background:#bccbfa;border-radius:50%"></div>
<div class="t" style="left:63px;top:502.2px;width:60px;height:32px;text-align:center"><span style="display:inline-block;font-size:39px;-webkit-text-stroke:1.5px #15275f;color:#15275f;transform:scaleX(0.74);transform-origin:50% 0">3</span></div>
<div style="position:absolute;left:132px;top:489px;width:60px;height:60px;background:#fff"></div>
<div style="position:absolute;left:136.5px;top:494.5px;width:51px;height:51px;background:#bccbfa;border-radius:50%"></div>
<div class="t" style="left:124.25px;top:502.2px;width:60px;height:32px;text-align:center"><span style="display:inline-block;font-size:39px;-webkit-text-stroke:1.5px #15275f;color:#15275f;transform:scaleX(0.74);transform-origin:50% 0">2</span></div>
<div class="t" style="left:141.75px;top:502.2px;width:60px;height:32px;text-align:center"><span style="display:inline-block;font-size:39px;-webkit-text-stroke:1.5px #15275f;color:#15275f;transform:scaleX(0.74);transform-origin:50% 0">4</span></div>
<div style="position:absolute;left:202px;top:489px;width:60px;height:60px;background:#fff"></div>
<div style="position:absolute;left:206.0px;top:494.5px;width:51px;height:51px;background:#bccbfa;border-radius:50%"></div>
<div style="position:absolute;left:272px;top:489px;width:60px;height:60px;background:#fff"></div>
<div style="position:absolute;left:275.5px;top:494.5px;width:51px;height:51px;background:#bccbfa;border-radius:50%"></div>
<div class="t" style="left:264.25px;top:502.2px;width:60px;height:32px;text-align:center"><span style="display:inline-block;font-size:39px;-webkit-text-stroke:1.5px #15275f;color:#15275f;transform:scaleX(0.74);transform-origin:50% 0">5</span></div>
<div class="t" style="left:281.75px;top:502.2px;width:60px;height:32px;text-align:center"><span style="display:inline-block;font-size:39px;-webkit-text-stroke:1.5px #15275f;color:#15275f;transform:scaleX(0.74);transform-origin:50% 0">0</span></div>
<div style="position:absolute;left:342px;top:489px;width:60px;height:60px;background:#fff"></div>
<div style="position:absolute;left:345.0px;top:494.5px;width:51px;height:51px;background:#bccbfa;border-radius:50%"></div>
<div class="t" style="left:334.25px;top:502.2px;width:60px;height:32px;text-align:center"><span style="display:inline-block;font-size:39px;-webkit-text-stroke:1.5px #15275f;color:#15275f;transform:scaleX(0.74);transform-origin:50% 0">6</span></div>
<div class="t" style="left:351.75px;top:502.2px;width:60px;height:32px;text-align:center"><span style="display:inline-block;font-size:39px;-webkit-text-stroke:1.5px #15275f;color:#15275f;transform:scaleX(0.74);transform-origin:50% 0">5</span></div>
<div style="position:absolute;left:62px;top:559px;width:60px;height:60px;background:#fff"></div>
<div style="position:absolute;left:67.0px;top:564.3px;width:51px;height:51px;background:#bccbfa;border-radius:50%"></div>
<svg style="left:77.25px;top:576.8px" width="12" height="29"><path d="M5.3 0 H9.3 V28 H5.3 V4 L0.9 7.8 V5.3 Z" fill="#15275f"/></svg>
<div class="t" style="left:71.75px;top:572.2px;width:60px;height:32px;text-align:center"><span style="display:inline-block;font-size:39px;-webkit-text-stroke:1.5px #15275f;color:#15275f;transform:scaleX(0.74);transform-origin:50% 0">0</span></div>
<div style="position:absolute;left:132px;top:559px;width:60px;height:60px;background:#fff"></div>
<div style="position:absolute;left:136.5px;top:564.3px;width:51px;height:51px;background:#bccbfa;border-radius:50%"></div>
<div class="t" style="left:124.25px;top:572.2px;width:60px;height:32px;text-align:center"><span style="display:inline-block;font-size:39px;-webkit-text-stroke:1.5px #15275f;color:#15275f;transform:scaleX(0.74);transform-origin:50% 0">2</span></div>
<svg style="left:164.75px;top:576.8px" width="12" height="29"><path d="M5.3 0 H9.3 V28 H5.3 V4 L0.9 7.8 V5.3 Z" fill="#15275f"/></svg>
<div style="position:absolute;left:202px;top:559px;width:60px;height:60px;background:#fff"></div>
<div style="position:absolute;left:206.0px;top:564.3px;width:51px;height:51px;background:#bccbfa;border-radius:50%"></div>
<div class="t" style="left:194.25px;top:572.2px;width:60px;height:32px;text-align:center"><span style="display:inline-block;font-size:39px;-webkit-text-stroke:1.5px #15275f;color:#15275f;transform:scaleX(0.74);transform-origin:50% 0">4</span></div>
<div class="t" style="left:211.75px;top:572.2px;width:60px;height:32px;text-align:center"><span style="display:inline-block;font-size:39px;-webkit-text-stroke:1.5px #15275f;color:#15275f;transform:scaleX(0.74);transform-origin:50% 0">2</span></div>
<div style="position:absolute;left:272px;top:559px;width:60px;height:60px;background:#fff"></div>
<div style="position:absolute;left:275.5px;top:564.3px;width:51px;height:51px;background:#bccbfa;border-radius:50%"></div>
<div class="t" style="left:264.25px;top:572.2px;width:60px;height:32px;text-align:center"><span style="display:inline-block;font-size:39px;-webkit-text-stroke:1.5px #15275f;color:#15275f;transform:scaleX(0.74);transform-origin:50% 0">4</span></div>
<div class="t" style="left:281.75px;top:572.2px;width:60px;height:32px;text-align:center"><span style="display:inline-block;font-size:39px;-webkit-text-stroke:1.5px #15275f;color:#15275f;transform:scaleX(0.74);transform-origin:50% 0">8</span></div>
<div style="position:absolute;left:342px;top:559px;width:60px;height:60px;background:#fff"></div>
<div style="position:absolute;left:345.0px;top:564.3px;width:51px;height:51px;background:#bccbfa;border-radius:50%"></div>
<div class="t" style="left:334.25px;top:572.2px;width:60px;height:32px;text-align:center"><span style="display:inline-block;font-size:39px;-webkit-text-stroke:1.5px #15275f;color:#15275f;transform:scaleX(0.74);transform-origin:50% 0">6</span></div>
<div class="t" style="left:351.75px;top:572.2px;width:60px;height:32px;text-align:center"><span style="display:inline-block;font-size:39px;-webkit-text-stroke:1.5px #15275f;color:#15275f;transform:scaleX(0.74);transform-origin:50% 0">2</span></div>
<div style="position:absolute;left:62px;top:629px;width:60px;height:60px;background:#fff"></div>
<div style="position:absolute;left:67.0px;top:634.0999999999999px;width:51px;height:51px;background:#bccbfa;border-radius:50%"></div>
<svg style="left:77.25px;top:646.8px" width="12" height="29"><path d="M5.3 0 H9.3 V28 H5.3 V4 L0.9 7.8 V5.3 Z" fill="#15275f"/></svg>
<div class="t" style="left:71.75px;top:642.2px;width:60px;height:32px;text-align:center"><span style="display:inline-block;font-size:39px;-webkit-text-stroke:1.5px #15275f;color:#15275f;transform:scaleX(0.74);transform-origin:50% 0">8</span></div>
<div style="position:absolute;left:132px;top:629px;width:60px;height:60px;background:#fff"></div>
<div style="position:absolute;left:136.5px;top:634.0999999999999px;width:51px;height:51px;background:#bccbfa;border-radius:50%"></div>
<div class="t" style="left:124.25px;top:642.2px;width:60px;height:32px;text-align:center"><span style="display:inline-block;font-size:39px;-webkit-text-stroke:1.5px #15275f;color:#15275f;transform:scaleX(0.74);transform-origin:50% 0">2</span></div>
<div class="t" style="left:141.75px;top:642.2px;width:60px;height:32px;text-align:center"><span style="display:inline-block;font-size:39px;-webkit-text-stroke:1.5px #15275f;color:#15275f;transform:scaleX(0.74);transform-origin:50% 0">2</span></div>
<div style="position:absolute;left:202px;top:629px;width:60px;height:60px;background:#fff"></div>
<div style="position:absolute;left:206.0px;top:634.0999999999999px;width:51px;height:51px;background:#bccbfa;border-radius:50%"></div>
<div class="t" style="left:194.25px;top:642.2px;width:60px;height:32px;text-align:center"><span style="display:inline-block;font-size:39px;-webkit-text-stroke:1.5px #15275f;color:#15275f;transform:scaleX(0.74);transform-origin:50% 0">3</span></div>
<div class="t" style="left:211.75px;top:642.2px;width:60px;height:32px;text-align:center"><span style="display:inline-block;font-size:39px;-webkit-text-stroke:1.5px #15275f;color:#15275f;transform:scaleX(0.74);transform-origin:50% 0">5</span></div>
<div style="position:absolute;left:272px;top:629px;width:60px;height:60px;background:#fff"></div>
<div style="position:absolute;left:275.5px;top:634.0999999999999px;width:51px;height:51px;background:#bccbfa;border-radius:50%"></div>
<div class="t" style="left:264.25px;top:642.2px;width:60px;height:32px;text-align:center"><span style="display:inline-block;font-size:39px;-webkit-text-stroke:1.5px #15275f;color:#15275f;transform:scaleX(0.74);transform-origin:50% 0">5</span></div>
<div class="t" style="left:281.75px;top:642.2px;width:60px;height:32px;text-align:center"><span style="display:inline-block;font-size:39px;-webkit-text-stroke:1.5px #15275f;color:#15275f;transform:scaleX(0.74);transform-origin:50% 0">4</span></div>
<div style="position:absolute;left:342px;top:629px;width:60px;height:60px;background:#fff"></div>
<div style="position:absolute;left:345.0px;top:634.0999999999999px;width:51px;height:51px;background:#bccbfa;border-radius:50%"></div>
<div class="t" style="left:334.25px;top:642.2px;width:60px;height:32px;text-align:center"><span style="display:inline-block;font-size:39px;-webkit-text-stroke:1.5px #15275f;color:#15275f;transform:scaleX(0.74);transform-origin:50% 0">7</span></div>
<div class="t" style="left:351.75px;top:642.2px;width:60px;height:32px;text-align:center"><span style="display:inline-block;font-size:39px;-webkit-text-stroke:1.5px #15275f;color:#15275f;transform:scaleX(0.74);transform-origin:50% 0">3</span></div>
<svg style="left:0;top:0" width="1107" height="946"><polygon points="232.0,500.2 236.4,504.8 243.1,501.7 244.6,507.1 252.5,505.9 250.8,511.3 258.8,512.3 254.2,516.8 261.0,519.8 254.2,522.8 258.8,527.3 250.8,528.3 252.5,533.7 244.6,532.5 243.1,537.9 236.4,534.8 232.0,539.4 227.6,534.8 220.9,537.9 219.4,532.5 211.5,533.7 213.2,528.3 205.2,527.3 209.8,522.8 203.0,519.8 209.8,516.8 205.2,512.3 213.2,511.3 211.5,505.9 219.4,507.1 220.9,501.7 227.6,504.8" fill="#f00"/></svg>
<div class="t" id="x55" style="left:216px;top:511px;font-size:18px;font-weight:bold;color:#ff0;-webkit-text-stroke:0.6px #ff0;transform:scaleX(0.8414);transform-origin:0 0;">Free</div>
<svg style="left:0;top:0" width="1107" height="946"><defs><linearGradient id="chrome" x1="0" y1="269" x2="0" y2="332" gradientUnits="userSpaceOnUse"><stop offset="0" stop-color="#909090"/><stop offset="0.2" stop-color="#606060"/><stop offset="0.45" stop-color="#9a9a9a"/><stop offset="0.58" stop-color="#ffffff"/><stop offset="0.64" stop-color="#3a3a3a"/><stop offset="0.85" stop-color="#6a6a6a"/><stop offset="1" stop-color="#b0b0b0"/></linearGradient><linearGradient id="ext" x1="0" y1="269" x2="0" y2="336" gradientUnits="userSpaceOnUse"><stop offset="0" stop-color="#505050"/><stop offset="0.55" stop-color="#e0e0e0"/><stop offset="0.65" stop-color="#303030"/><stop offset="1" stop-color="#8a8a8a"/></linearGradient></defs><g font-family="Liberation Serif" font-weight="normal" font-size="95" fill="url(#ext)"><text x="58.5" y="333.0" textLength="69.5" lengthAdjust="spacingAndGlyphs">B</text><text x="132.1" y="333.0" textLength="56.6" lengthAdjust="spacingAndGlyphs">I</text><text x="193" y="333.0" textLength="72.6" lengthAdjust="spacingAndGlyphs">N</text><text x="261.5" y="333.0" textLength="72.8" lengthAdjust="spacingAndGlyphs">G</text><text x="330" y="333.0" textLength="71.6" lengthAdjust="spacingAndGlyphs">O</text></g><g font-family="Liberation Serif" font-weight="normal" font-size="95" fill="url(#ext)"><text x="59.5" y="332.5" textLength="69.5" lengthAdjust="spacingAndGlyphs">B</text><text x="133.1" y="332.5" textLength="56.6" lengthAdjust="spacingAndGlyphs">I</text><text x="194" y="332.5" textLength="72.6" lengthAdjust="spacingAndGlyphs">N</text><text x="262.5" y="332.5" textLength="72.8" lengthAdjust="spacingAndGlyphs">G</text><text x="331" y="332.5" textLength="71.6" lengthAdjust="spacingAndGlyphs">O</text></g><g font-family="Liberation Serif" font-weight="normal" font-size="95" fill="url(#ext)"><text x="60.5" y="332.0" textLength="69.5" lengthAdjust="spacingAndGlyphs">B</text><text x="134.1" y="332.0" textLength="56.6" lengthAdjust="spacingAndGlyphs">I</text><text x="195" y="332.0" textLength="72.6" lengthAdjust="spacingAndGlyphs">N</text><text x="263.5" y="332.0" textLength="72.8" lengthAdjust="spacingAndGlyphs">G</text><text x="332" y="332.0" textLength="71.6" lengthAdjust="spacingAndGlyphs">O</text></g><g font-family="Liberation Serif" font-weight="normal" font-size="95" fill="url(#ext)"><text x="61.5" y="331.5" textLength="69.5" lengthAdjust="spacingAndGlyphs">B</text><text x="135.1" y="331.5" textLength="56.6" lengthAdjust="spacingAndGlyphs">I</text><text x="196" y="331.5" textLength="72.6" lengthAdjust="spacingAndGlyphs">N</text><text x="264.5" y="331.5" textLength="72.8" lengthAdjust="spacingAndGlyphs">G</text><text x="333" y="331.5" textLength="71.6" lengthAdjust="spacingAndGlyphs">O</text></g><g font-family="Liberation Serif" font-weight="normal" font-size="95" fill="url(#chrome)"><text x="62.5" y="331" textLength="69.5" lengthAdjust="spacingAndGlyphs">B</text><text x="136.1" y="331" textLength="56.6" lengthAdjust="spacingAndGlyphs">I</text><text x="197" y="331" textLength="72.6" lengthAdjust="spacingAndGlyphs">N</text><text x="265.5" y="331" textLength="72.8" lengthAdjust="spacingAndGlyphs">G</text><text x="334" y="331" textLength="71.6" lengthAdjust="spacingAndGlyphs">O</text></g></svg>
<div class="t" id="x56" style="left:64.5px;top:697.5px;font-size:9.5px;letter-spacing:2px;font-weight:bold;color:#fff;-webkit-text-stroke:0.15px #fff;transform:scaleX(0.9417);transform-origin:0 0;">森本家のワークシート</div>
<div class="t" id="x57" style="left:332.5px;top:697.5px;font-size:9.5px;letter-spacing:2px;font-weight:bold;color:#fff;-webkit-text-stroke:0.15px #fff;transform:scaleX(0.9444);transform-origin:0 0;">日経パソコン</div>
<div style="position:absolute;left:28px;top:226px;width:21px;height:18px;border:2px solid #217346"></div>
<div style="position:absolute;left:44px;top:239px;width:7px;height:7px;background:#217346;border:1px solid #fff"></div>
<div style="position:absolute;left:1px;top:896px;width:1104px;height:27px;background:#e6e6e6"></div>
<svg style="left:26px;top:905px" width="40" height="10"><path d="M5 0.5 V9 L1 4.75Z" fill="#bbb"/><path d="M33 0.5 V9 L37 4.75Z" fill="#bbb"/></svg>
<div style="position:absolute;left:101px;top:901px;width:1px;height:19px;background:#999"></div>
<div style="position:absolute;left:151px;top:901px;width:1px;height:19px;background:#999"></div>
<div style="position:absolute;left:210px;top:901px;width:1px;height:19px;background:#999"></div>
<div style="position:absolute;left:269px;top:901px;width:1px;height:19px;background:#999"></div>
<div style="position:absolute;left:328px;top:901px;width:1px;height:19px;background:#999"></div>
<div style="position:absolute;left:542px;top:901px;width:1px;height:19px;background:#999"></div>
<div style="position:absolute;left:388px;top:896px;width:78px;height:22px;background:#fff"></div>
<div style="position:absolute;left:388px;top:917px;width:78px;height:2.5px;background:#217346"></div>
<div class="t" id="x58" style="left:113px;top:902px;font-size:12.5px;color:#444;transform:scaleX(1.0000);transform-origin:0 0;">説明</div>
<div class="t" id="x59" style="left:163px;top:902px;font-size:12.5px;color:#444;transform:scaleX(1.0621);transform-origin:0 0;">乱数1</div>
<div class="t" id="x60" style="left:222px;top:902px;font-size:12.5px;color:#444;transform:scaleX(1.0621);transform-origin:0 0;">乱数2</div>
<div class="t" id="x61" style="left:281px;top:902px;font-size:12.5px;color:#444;transform:scaleX(1.0621);transform-origin:0 0;">乱数3</div>
<div class="t" id="x62" style="left:340px;top:902px;font-size:12.5px;color:#444;transform:scaleX(1.0621);transform-origin:0 0;">乱数4</div>
<div class="t" id="x63" style="left:400px;top:902px;font-size:12.5px;color:#217346;transform:scaleX(0.8821);transform-origin:0 0;">カード1枚</div>
<div class="t" id="x64" style="left:478px;top:902px;font-size:12.5px;color:#444;transform:scaleX(0.8821);transform-origin:0 0;">カード4枚</div>
<svg style="left:575px;top:900px" width="18" height="18"><circle cx="9" cy="9" r="7.5" fill="none" stroke="#666" stroke-width="1.3"/><path d="M9 4.5 V13.5 M4.5 9 H13.5" stroke="#666" stroke-width="1.6"/></svg>
<svg style="left:664px;top:904px" width="3" height="12"><rect x="0.5" y="0" width="2" height="2" fill="#aaa"/><rect x="0.5" y="4.5" width="2" height="2" fill="#aaa"/><rect x="0.5" y="9" width="2" height="2" fill="#aaa"/></svg>
<div style="position:absolute;left:681px;top:902px;width:15px;height:15px;background:#fff;border:1px solid #ababab"></div>
<svg style="left:686px;top:905px" width="6" height="9"><path d="M5 0.5 V8.5 L1 4.5Z" fill="#666"/></svg>
<div style="position:absolute;left:695px;top:902px;width:366px;height:15px;background:#fff;border:1px solid #ababab"></div>
<div style="position:absolute;left:1061px;top:902px;width:8px;height:15px;background:#dadada"></div>
<div style="position:absolute;left:1072px;top:902px;width:15px;height:15px;background:#fff;border:1px solid #c6c6c6"></div>
<svg style="left:1077px;top:905px" width="6" height="9"><path d="M1 0.5 V8.5 L5 4.5Z" fill="#666"/></svg>
<div style="position:absolute;left:1px;top:923px;width:1104px;height:22px;background:#f3f3f3"></div>
<div style="position:absolute;left:1px;top:923px;width:1104px;height:1px;background:#d8d8d8"></div>
<div class="t" id="x65" style="left:8px;top:928px;font-size:12.5px;color:#444;transform:scaleX(0.9423);transform-origin:0 0;">準備完了</div>
<div style="position:absolute;left:803px;top:924px;width:38px;height:21px;background:#c6c6c6"></div>
<svg style="left:814px;top:926px" width="16" height="16"><g fill="none" stroke="#666" stroke-width="1.2"><rect x="1" y="1" width="13" height="13"/><path d="M5.3 1 V14 M9.6 1 V14 M1 5.3 H14 M1 9.6 H14"/></g></svg>
<svg style="left:852px;top:926px" width="16" height="16"><g fill="none" stroke="#666" stroke-width="1.2"><rect x="1" y="1" width="13" height="13"/><rect x="3.5" y="3.5" width="8" height="8"/><path d="M5 5.5 H10 M5 7.5 H10 M5 9.5 H10"/></g></svg>
<svg style="left:890px;top:926px" width="16" height="16"><g fill="none" stroke="#666" stroke-width="1.2"><rect x="1" y="1" width="13" height="13"/><path d="M1 8.5 H14 M5.5 1 V8.5 M9.5 1 V8.5"/></g></svg>
<div style="position:absolute;left:922px;top:933px;width:7px;height:2px;background:#555"></div>
<div style="position:absolute;left:932px;top:933px;width:100px;height:1px;background:#999"></div>
<div style="position:absolute;left:979px;top:929px;width:6px;height:10px;background:#666"></div>
<svg style="left:1034px;top:929px" width="10" height="10"><path d="M5 0.5 V9.5 M0.5 5 H9.5" stroke="#555" stroke-width="1.8"/></svg>
<div class="t" id="x66" style="left:1054px;top:927px;font-size:13px;color:#444;transform:scaleX(0.9624);transform-origin:0 0;">100%</div>
<div style="position:absolute;left:0px;top:0px;width:1px;height:946px;background:#217346"></div>
<div style="position:absolute;left:1px;top:65px;width:1px;height:880px;background:#dff0e6"></div>
<div style="position:absolute;left:1105px;top:0px;width:2px;height:946px;background:#217346"></div>
<div style="position:absolute;left:0px;top:945px;width:1107px;height:1px;background:#217346"></div>
</body></html>
